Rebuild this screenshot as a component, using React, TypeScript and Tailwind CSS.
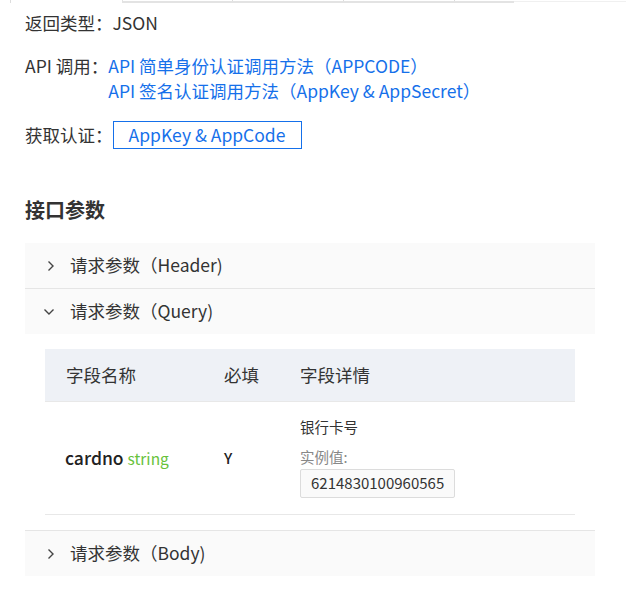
const font = { fontFamily: '"Noto Sans CJK SC", "Noto Sans", sans-serif' };

function Chevron({ open }: { open?: boolean }) {
  if (open) {
    return (
      <svg width="12" height="8" viewBox="0 0 12 8" className="mr-[15px] ml-[-4px]">
        <polyline points="1.5,1.5 6,6 10.5,1.5" fill="none" stroke="#444" strokeWidth="1.4" />
      </svg>
    );
  }
  return (
    <svg width="8" height="12" viewBox="0 0 8 12" className="mr-[15px]">
      <polyline points="1.5,1.5 6,6 1.5,10.5" fill="none" stroke="#444" strokeWidth="1.4" />
    </svg>
  );
}

function AccordionHeader({ title, open }: { title: string; open?: boolean }) {
  return (
    <div className="flex h-[45px] items-center bg-[#fafafa] pl-[22px] text-[17.5px] text-[#333]">
      <Chevron open={open} />
      <span>{title}</span>
    </div>
  );
}

export default function App() {
  return (
    <div className="min-h-[592px] w-[626px] bg-white" style={font}>
      {/* remnant of the tab strip above */}
      <div className="flex h-[3px]">
        <div className="ml-[10px] w-[112px] border-l border-[#ddd]" />
        <div className="flex w-[392px] border-b-2 border-l border-[#e3e3e3]">
          <div className="w-[110px] border-r border-[#ddd]" />
          <div className="w-[111px] border-r border-[#ddd]" />
          <div className="w-[111px] border-r border-[#ddd]" />
        </div>
        <div className="h-[2px] flex-1 border-b border-[#f0f0f0]" />
      </div>

      <div className="px-[25px]">
        <div className="mt-[8px] text-[17.5px] leading-[24px] text-[#333]">返回类型：JSON</div>

        <div className="mt-[18px] flex text-[17.5px] leading-[25px]">
          <span className="text-[#333]">API 调用：</span>
          <div className="flex flex-col text-[#1570ea]">
            <span>API 简单身份认证调用方法（APPCODE）</span>
            <span>API 签名认证调用方法（AppKey &amp; AppSecret）</span>
          </div>
        </div>

        <div className="mt-[18px] flex items-center text-[17.5px]">
          <span className="text-[#333]">获取认证：</span>
          <span className="flex h-[28px] w-[189px] items-center justify-center border border-[#1570ea] text-[#1570ea]">
            AppKey &amp; AppCode
          </span>
        </div>

        <div className="mt-[47px] text-[20px] font-bold leading-[28px] text-[#333]">接口参数</div>

        <div className="mt-[19px] w-[570px]">
          <AccordionHeader title="请求参数（Header)" />
          <div className="border-t border-[#e5e5e5]">
            <AccordionHeader title="请求参数（Query)" open />
          </div>

          <div className="px-[20px] pb-[15px] pt-[15px]">
            <div className="grid grid-cols-[159px_76px_1fr] border-b border-[#e8e8e8] bg-[#eef1f6] text-[17.5px] text-[#333]">
              <div className="flex h-[52px] items-center pl-[21px]">字段名称</div>
              <div className="flex h-[52px] items-center pl-[20px]">必填</div>
              <div className="flex h-[52px] items-center pl-[20px]">字段详情</div>
            </div>
            <div className="grid grid-cols-[159px_76px_1fr] border-b border-[#e8e8e8]">
              <div className="flex items-baseline self-center pl-[20px]">
                <span className="text-[17.5px] font-medium text-[#222]">cardno</span>
                <span className="ml-[4px] text-[15.5px] text-[#67c23a]">string</span>
              </div>
              <div className="flex items-center pl-[20px] text-[15px] font-medium text-[#222]">Y</div>
              <div className="flex flex-col items-start pb-[16px] pl-[20px] pt-[15px]">
                <span className="text-[14.5px] leading-[20px] text-[#333]">银行卡号</span>
                <span className="mt-[10px] text-[14.5px] leading-[20px] text-[#888]">实例值:</span>
                <span className="mt-[2px] flex h-[29px] items-center rounded-[2px] border border-[#dcdcdc] bg-[#fafafa] px-[10px] text-[15px] text-[#333]">
                  6214830100960565
                </span>
              </div>
            </div>
          </div>

          <div className="border-t border-[#e5e5e5]">
            <AccordionHeader title="请求参数（Body)" />
          </div>
        </div>
      </div>
    </div>
  );
}
